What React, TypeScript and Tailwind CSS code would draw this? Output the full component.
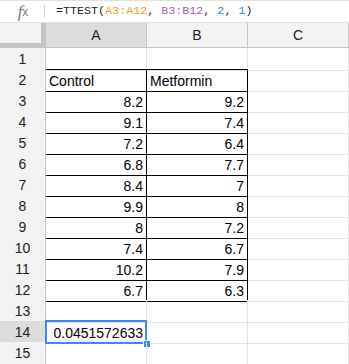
import React from "react"

type Row = { n: number; a?: string; b?: string; kind?: "head" | "data" }

const rows: Row[] = [
  { n: 1 },
  { n: 2, a: "Control", b: "Metformin", kind: "head" },
  { n: 3, a: "8.2", b: "9.2", kind: "data" },
  { n: 4, a: "9.1", b: "7.4", kind: "data" },
  { n: 5, a: "7.2", b: "6.4", kind: "data" },
  { n: 6, a: "6.8", b: "7.7", kind: "data" },
  { n: 7, a: "8.4", b: "7", kind: "data" },
  { n: 8, a: "9.9", b: "8", kind: "data" },
  { n: 9, a: "8", b: "7.2", kind: "data" },
  { n: 10, a: "7.4", b: "6.7", kind: "data" },
  { n: 11, a: "10.2", b: "7.9", kind: "data" },
  { n: 12, a: "6.7", b: "6.3", kind: "data" },
  { n: 13 },
  { n: 14, a: "0.0451572633" },
  { n: 15 },
]

const font = "font-['Liberation_Sans',Arial,sans-serif]"

function FormulaBar() {
  return (
    <div className="flex h-[23px] items-center border-t border-b border-[#e2e2e2] bg-white">
      <div className="flex w-[44px] items-center justify-center pl-[2px] text-[#7a7a7a]">
        <span className="font-['Liberation_Serif',serif] text-[17px] italic leading-none">f</span>
        <span className={`${font} text-[12px] leading-none`}>x</span>
      </div>
      <div className="h-[13px] w-px bg-[#c3d5f5]" />
      <div className="pl-[11px] pt-[1px] font-['Liberation_Mono',monospace] text-[11.7px] leading-none text-[#222]">
        =TTEST(<span className="text-[#f39a2b]">A3:A12</span>,{" "}
        <span className="text-[#a35fb5]">B3:B12</span>, <span className="text-[#3d7fd9]">2</span>,{" "}
        <span className="text-[#3d7fd9]">1</span>)
      </div>
    </div>
  )
}

function ColumnHeader() {
  return (
    <div className={`grid grid-cols-[46px_101px_101px_101px] h-[25px] ${font} text-[14px] text-[#222]`}>
      <div className="border-r-[5px] border-b-[5px] border-[#c4c4c4] bg-[#f3f3f3]" />
      <div className="flex items-center justify-center border-r border-b border-[#c4c4c4] bg-[#dcdcdc]">A</div>
      <div className="flex items-center justify-center border-r border-b border-[#c4c4c4] bg-[#f3f3f3]">B</div>
      <div className="flex items-center justify-center border-r border-b border-[#c4c4c4] bg-[#f3f3f3]">C</div>
    </div>
  )
}

function SheetRow({ row }: { row: Row }) {
  const boxed = row.kind !== undefined
  const last = row.n === 12
  const selected = row.n === 14
  const cellEdge = boxed ? "border-r-black" : "border-r-[#e2e2e2]"
  const cellBottom = last || boxed ? "border-b-black" : "border-b-[#e2e2e2]"
  const top = row.n === 2 ? "shadow-[inset_0_1px_0_#000]" : ""

  return (
    <div className={`grid grid-cols-[46px_101px_101px_101px] h-[21px] ${font} text-[14px]`}>
      <div
        className={`flex items-center justify-center border-r border-b border-r-[#c4c4c4] border-b-[#d6d6d6] pt-[1px] text-[#222] ${
          selected ? "bg-[#dcdcdc]" : "bg-[#f3f3f3]"
        }`}
      >
        {row.n}
      </div>
      <div
        className={`relative flex items-end border-r border-b px-[3px] pb-[2px] leading-[16px] text-black ${cellEdge} ${cellBottom} ${top} ${
          row.kind === "head" ? "justify-start" : "justify-end"
        }`}
      >
        {row.a}
        {selected && (
          <>
            <div className="absolute -top-px -left-px -right-px -bottom-px border-2 border-[#4285f4]" />
            <div className="absolute -right-[4px] -bottom-[4px] h-[6px] w-[6px] bg-[#4285f4] outline outline-1 outline-white" />
          </>
        )}
      </div>
      <div
        className={`flex items-end border-r border-b px-[3px] pb-[2px] leading-[16px] text-black ${cellEdge} ${cellBottom} ${top} ${
          row.kind === "head" ? "justify-start" : "justify-end"
        }`}
      >
        {row.b}
      </div>
      <div className="border-r border-b border-[#e2e2e2]" />
    </div>
  )
}

export default function App() {
  return (
    <div className="h-[364px] w-[349px] overflow-hidden bg-white">
      <FormulaBar />
      <ColumnHeader />
      {rows.map((r) => (
        <SheetRow key={r.n} row={r} />
      ))}
    </div>
  )
}
